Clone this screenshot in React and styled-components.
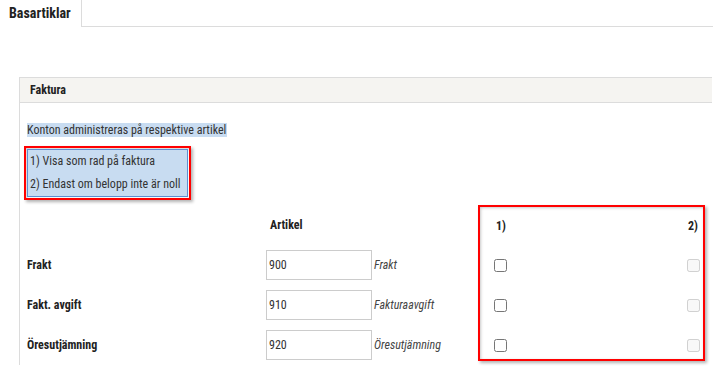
import React from "react";
import styled, { createGlobalStyle } from "styled-components";

const GlobalStyle = createGlobalStyle`
  html, body { margin: 0; padding: 0; background: #fff; }
  body {
    font-family: "Roboto Condensed", "Roboto", sans-serif;
    font-stretch: condensed;
    font-size: 12px;
    color: #333;
  }
`;

const Page = styled.div`
  width: 713px;
  height: 367px;
  overflow: hidden;
`;

const TabBar = styled.div`
  display: flex;
  height: 27px;
`;

const Tab = styled.div`
  width: 81px;
  box-sizing: border-box;
  padding: 5px 0 0 9px;
  font-size: 14px;
  font-weight: 700;
  color: #222;
`;

const TabFiller = styled.div`
  flex: 1;
  border-left: 1px solid #dcdcdc;
  border-bottom: 1px solid #dcdcdc;
`;

const Panel = styled.section`
  margin: 50px 0 0 19px;
  width: 692px;
  border-left: 1px solid #dcdcdc;
`;

const PanelHeader = styled.header`
  height: 24px;
  box-sizing: content-box;
  background: #f5f4f1;
  border-top: 1px solid #dcdcdc;
  border-bottom: 1px solid #dcdcdc;
  padding-left: 10px;
  display: flex;
  align-items: center;
  font-weight: 700;
  color: #222;
`;

const PanelBody = styled.div`
  padding: 19px 0 0 7px;
`;

const Intro = styled.p`
  margin: 0;
  line-height: 16px;
`;

const Selected = styled.span`
  background: #c8dcf1;
  padding: 0 1px 0 0;
`;

const Annotation = styled.div`
  box-sizing: border-box;
  border: 2px solid #f00;
  box-shadow: 2px 2px 3px rgba(0, 0, 0, 0.3), inset 1px 1px 3px rgba(0, 0, 0, 0.22);
`;

const LegendNote = styled(Annotation)`
  width: 167px;
  margin: 8px 0 0 -3px;
  padding: 1px;
`;

const LegendBox = styled.div`
  background: #c8dcf1;
  border: 1px solid #5b8fd3;
  padding: 0 0 0 2px;
`;

const LegendLine = styled.div`
  height: 23px;
  line-height: 23px;
`;

const Table = styled.div`
  display: grid;
  grid-template-columns: 239px 212px 227px;
  grid-template-rows: 40px 40px 40px 40px;
  margin-top: 5px;
`;

const HeadCell = styled.div`
  display: flex;
  align-items: center;
  font-weight: 700;
  color: #222;
  padding-left: ${p => p.$indent || 0}px;
`;

const Label = styled.div`
  display: flex;
  align-items: center;
  font-weight: 700;
  color: #222;
`;

const InputCell = styled.div`
  display: flex;
  align-items: center;
  gap: 2px;
`;

const TextInput = styled.input`
  box-sizing: border-box;
  width: 106px;
  height: 30px;
  margin: 0;
  border: 1px solid #cccccc;
  padding: 0 2px;
  font: inherit;
  color: #333;
  outline: none;
`;

const Description = styled.span`
  font-style: italic;
  color: #444;
`;

const CheckNote = styled(Annotation)`
  grid-column: 3;
  grid-row: 1 / span 4;
  height: 156px;
  align-self: start;
  display: grid;
  grid-template-columns: 1fr 1fr;
  grid-template-rows: 38px 40px 40px 34px;
  padding: 0 3px 0 14px;
`;

const CheckHead = styled.div`
  display: flex;
  align-items: center;
  justify-content: ${p => (p.$right ? "flex-end" : "flex-start")};
  padding: ${p => (p.$right ? "0 2px 0 0" : "0 0 0 2px")};
  font-weight: 700;
  color: #222;
`;

const CheckCell = styled.div`
  display: flex;
  align-items: flex-start;
  padding-top: 14px;
  justify-content: ${p => (p.$right ? "flex-end" : "flex-start")};
`;

const Checkbox = styled.input.attrs({ type: "checkbox" })`
  width: 13px;
  height: 13px;
  margin: 0;
`;

const rows = [
  { label: "Frakt", value: "900", desc: "Frakt" },
  { label: "Fakt. avgift", value: "910", desc: "Fakturaavgift" },
  { label: "Öresutjämning", value: "920", desc: "Öresutjämning" },
];

export default function App() {
  return (
    <Page>
      <GlobalStyle />
      <TabBar>
        <Tab>Basartiklar</Tab>
        <TabFiller />
      </TabBar>
      <Panel>
        <PanelHeader>Faktura</PanelHeader>
        <PanelBody>
          <Intro>
            <Selected>Konton administreras på respektive artikel</Selected>
          </Intro>
          <LegendNote>
            <LegendBox>
              <LegendLine>1) Visa som rad på faktura</LegendLine>
              <LegendLine>2) Endast om belopp inte är noll</LegendLine>
            </LegendBox>
          </LegendNote>
          <Table>
            <HeadCell />
            <HeadCell $indent={4}>Artikel</HeadCell>
            <CheckNote>
              <CheckHead>1)</CheckHead>
              <CheckHead $right>2)</CheckHead>
              {rows.map(r => (
                <React.Fragment key={r.value}>
                  <CheckCell>
                    <Checkbox />
                  </CheckCell>
                  <CheckCell $right>
                    <Checkbox disabled />
                  </CheckCell>
                </React.Fragment>
              ))}
            </CheckNote>
            {rows.map(r => (
              <React.Fragment key={r.value}>
                <Label>{r.label}</Label>
                <InputCell>
                  <TextInput defaultValue={r.value} />
                  <Description>{r.desc}</Description>
                </InputCell>
              </React.Fragment>
            ))}
          </Table>
        </PanelBody>
      </Panel>
    </Page>
  );
}
